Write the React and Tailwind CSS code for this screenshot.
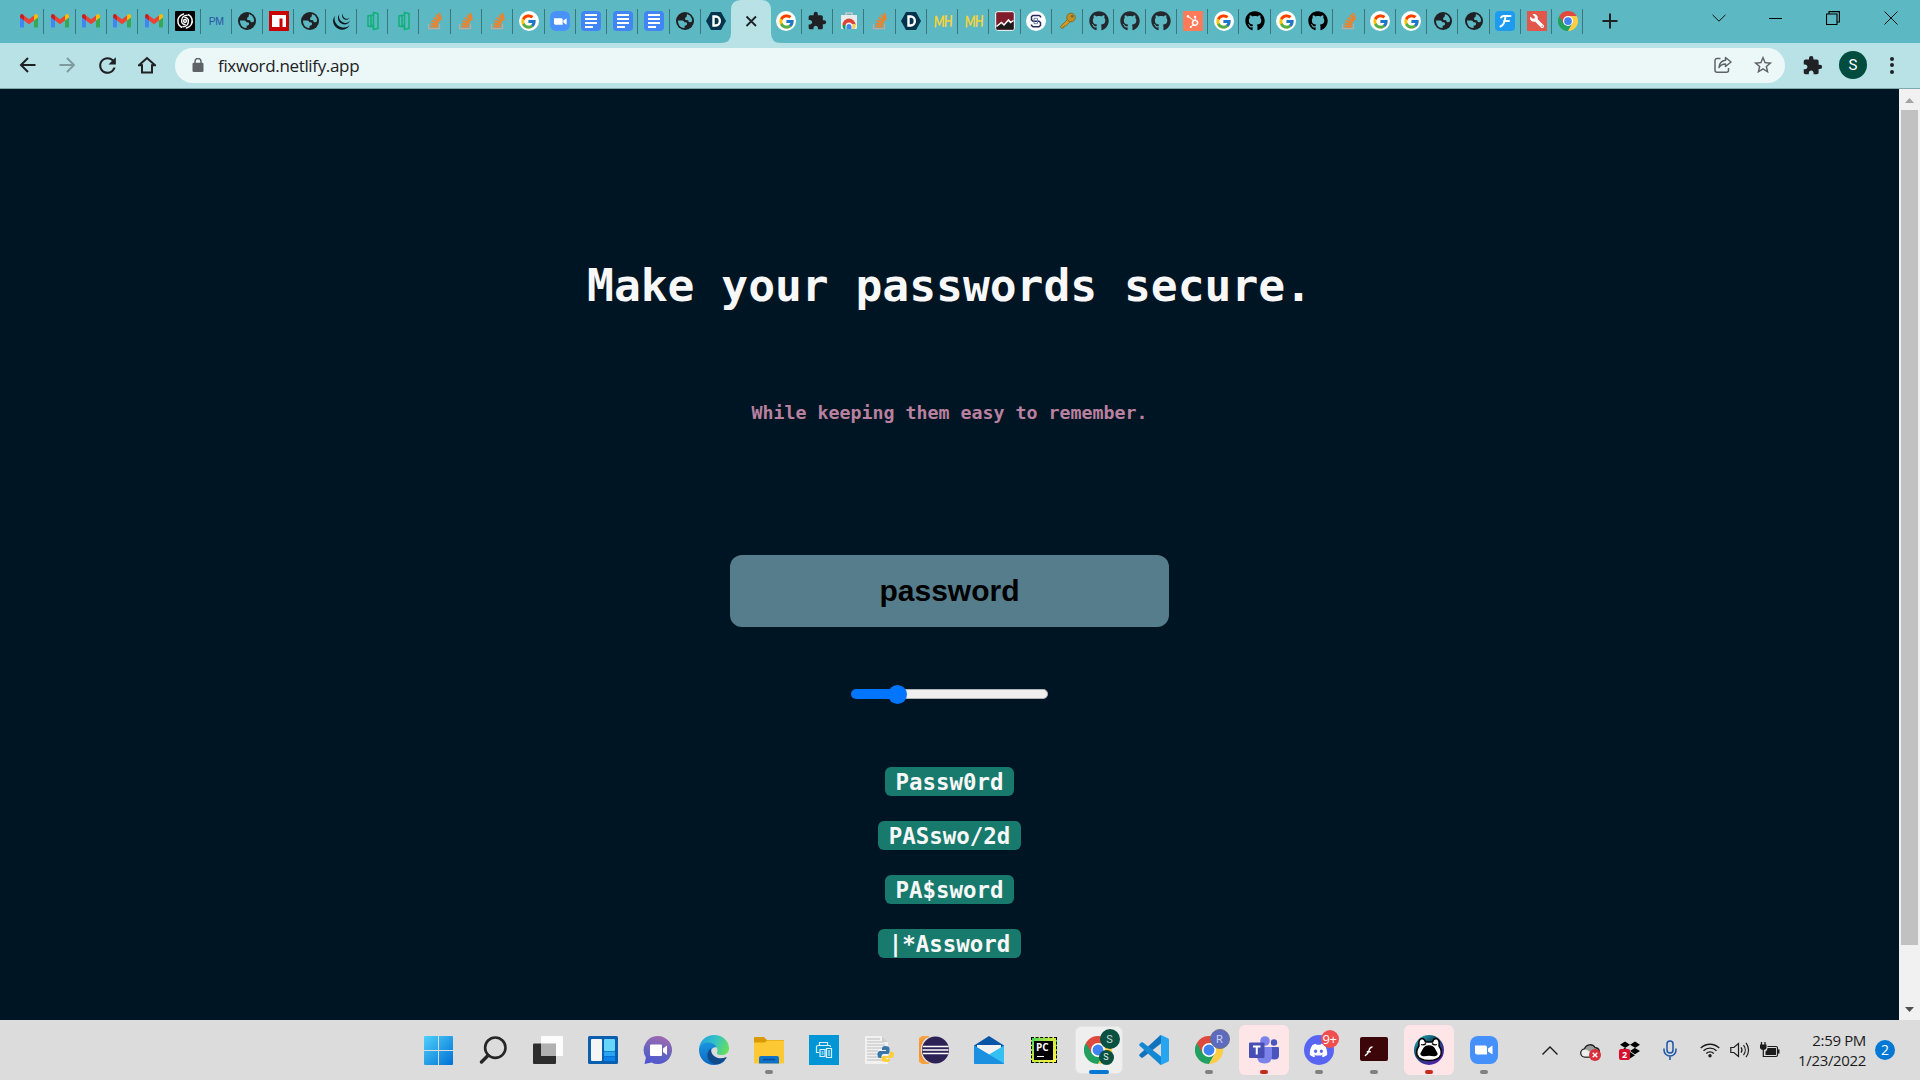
import React from "react";
import { FcGoogle } from "react-icons/fc";
import { FaGithub, FaHubspot, FaWrench, FaDiscord, FaDropbox } from "react-icons/fa";
import { SiJquery } from "react-icons/si";
import { MdExtension, MdRefresh } from "react-icons/md";

const UI = "font-['Open_Sans','Noto_Sans',sans-serif]";
const MONO = "font-['DejaVu_Sans_Mono','Liberation_Mono',monospace]";

const Gmail = () => (
  <svg viewBox="0 0 20 16" className="h-[16px] w-[20px]">
    <path d="M1 3v10.6c0 .6.4 1 1 1h3V7.4L1 4z" fill="#4285f4" />
    <path d="M19 3v10.6c0 .6-.4 1-1 1h-3V7.4L19 4z" fill="#34a853" />
    <path d="M15 2.4v5l4-3V3c0-1.900-2-2.600-3.300-1.300z" fill="#fbbc04" />
    <path d="M5 7.400v-5l5 3.800 5-3.800v5l-5 3.800z" fill="#ea4335" />
    <path d="M1 3v1.400l4 3v-5l-.7-.7C3 .4 1 1.100 1 3z" fill="#c5221f" />
  </svg>
);

const Spiral = () => (
  <div className="flex h-5 w-5 items-center justify-center rounded-[1px] bg-black">
    <svg viewBox="0 0 18 18" className="h-[18px] w-[18px]" fill="none" stroke="#fff" strokeWidth="1.500" strokeLinecap="round">
      <circle cx="9" cy="9" r="1.400" />
      <path d="M9 5.600a3.400 3.400 0 0 1 3.400 3.400c0 3.500-2.500 5.800-5.500 5.800" />
      <path d="M9 12.400A3.400 3.400 0 0 1 5.600 9c0-3.500 2.500-5.800 5.500-5.800" />
      <path d="M7.500 1.900a7.300 7.300 0 0 0-5.300 9.600q1 2.700 3.300 3.800" />
      <path d="M10.500 16.100a7.300 7.300 0 0 0 5.300-9.600q-1-2.700-3.300-3.800" />
    </svg>
  </div>
);

const PM = () => <span className="font-['Liberation_Sans',sans-serif] text-[10.500px] leading-none tracking-[-0.300px] text-[#2a55a5]">PM</span>;
const Globe = () => (
  <svg viewBox="0 0 18 18" className="h-[18px] w-[18px]">
    <circle cx="9" cy="9" r="9" fill="#202124" />
    <path d="M11 2q3.500 1 4.700 4.200.5 1.500.2 3.300-1.400 1.300-2.900.5-1-.6-.8-1.800l-2.700-.2Q8.700 7 9.200 5.900q.3-.9 1.300-1z" fill="#5cb8c2" />
    <path d="M2 8.500h4.500q1.700.2 1.700 1.700h1.900q1.500.7.900 2.300-.8 1.300-2.400 1.300v2.200Q4 16 2.600 12 1.900 10.200 2 8.500z" fill="#5cb8c2" />
  </svg>
);
const Npm = () => (
  <svg viewBox="0 0 20 20" className="h-5 w-5">
    <rect width="20" height="20" fill="#cb0000" />
    <path d="M3 4h14v12h-3.500V7.500H10.500V16H3z" fill="#fff" />
  </svg>
);
const Jq = () => <SiJquery className="h-[17px] w-[17px] text-[#10191f]" />;
const Door = () => (
  <svg viewBox="0 0 14 20" className="h-5 w-[14px]" fill="none" stroke="#14b07a" strokeWidth="1.600">
    <path d="M7.500 1.500l4.500 1.200v14.600l-4.500 1.200zM7.500 4L2 5v10l5.500 1M5 5v9.500h2.500" />
  </svg>
);
const SO = () => (
  <svg viewBox="0 0 16 18" className="h-[18px] w-4" fill="none">
    <path d="M1.500 12v4.700h11V12" stroke="#bcaaa4" strokeWidth="1.200" />
    <path d="M3.500 14.500h7.300M3.700 11.600l7.200.9M4.700 8.600l6.700 2.300M6.700 5.400l5.700 4.100M9.400 2.900l4.100 5.500M12.200 1l1.800 6.500" stroke="#f48024" strokeWidth="1.900" />
  </svg>
);
const G = () => (
  <div className="flex h-5 w-5 items-center justify-center rounded-full bg-white">
    <FcGoogle className="h-[17px] w-[17px]" />
  </div>
);
const Camera = ({ className }) => (
  <svg viewBox="0 0 18 12" className={className} fill="#fff">
    <path d="M0 1.500h10a2 2 0 0 1 2 2v7H2a2 2 0 0 1-2-2zM13 4.500L17.500 1.500v9L13 7.500z" />
  </svg>
);
const ZoomTab = () => (
  <div className="flex h-5 w-5 items-center justify-center rounded-md bg-[#4a92fb]">
    <Camera className="h-[9px] w-[13px]" />
  </div>
);
const Doc = () => (
  <div className="flex h-5 w-5 flex-col gap-[2px] rounded-sm bg-[#4285f4] pl-1 pt-[3px]">
    <i className="h-[2px] w-[12px] bg-white" />
    <i className="h-[2px] w-[12px] bg-white" />
    <i className="h-[2px] w-[12px] bg-white" />
    <i className="h-[2px] w-[8px] bg-white" />
  </div>
);
const Dee = () => (
  <svg viewBox="0 0 20 20" className="h-5 w-5">
    <path d="M5 1h10l5 9-5 9H5L0 10z" fill="#04344d" />
    <path d="M7.500 5.500h2.300a4 4.500 0 0 1 0 9H7.500z" fill="none" stroke="#fff" strokeWidth="2.400" />
  </svg>
);
const Puzzle = () => <MdExtension className="h-5 w-5 text-[#202124]" />;
const Store = () => (
  <svg viewBox="0 0 18 18" className="h-[18px] w-[18px]">
    <path d="M6 3V1h6v2" fill="none" stroke="#c9c9c9" strokeWidth="1.500" />
    <path d="M1 3h16v13a1 1 0 0 1-1 1H2a1 1 0 0 1-1-1z" fill="#e9eaea" />
    <path d="M2.500 13a6.500 6.500 0 0 1 13 0z" fill="#db4437" />
    <path d="M2.500 13q0 3 1.500 4h4l1-4z" fill="#0f9d58" />
    <path d="M15.500 12q0 4-1.500 5H8l3-5z" fill="#ffcd40" />
    <path d="M5.500 14a3.500 3.500 0 0 1 7 0v3h-7z" fill="#f1f1f1" />
    <path d="M6.500 14.500a2.500 2.500 0 0 1 5 0V17h-5z" fill="#4285f4" />
  </svg>
);
const MH = () => <span className="inline-block scale-x-[0.780] -rotate-3 font-['Lato',sans-serif] text-[16px] font-bold italic leading-none tracking-[-1px] text-[#f3d340]">MH</span>;
const Chart = () => (
  <svg viewBox="0 0 20 20" className="h-5 w-5">
    <rect x=".7" y=".7" width="18.600" height="18.600" rx="2" fill="#7f1d2d" stroke="#fff" strokeWidth="1" />
    <path d="M1.500 15.500l5-4 2.500 2.500 4.500-5 2 2.500 3-2V18.500h-17z" fill="#1d1a1c" />
    <path d="M1.500 15.500l5-4 2.500 2.500 4.500-5 2 2.500 3-2" fill="none" stroke="#fff" strokeWidth="1.500" />
  </svg>
);
const SB = () => (
  <svg viewBox="0 0 20 20" className="h-5 w-5" fill="none" stroke="#282c5c">
    <circle cx="10" cy="10" r="10" fill="#fff" stroke="none" />
    <path d="M14.500 6.500v-1L13 4.500H7L5.500 5.700V9L7 10.300h6l1.500 1.200v3L13 15.700H7l-1.500-1.200v-1" strokeWidth="1.500" />
    <path d="M8 7.300h3.500v5.400H8z" strokeWidth="1" stroke="#6d7fa8" />
  </svg>
);
const Key = () => (
  <svg viewBox="0 0 18 18" className="h-[18px] w-[18px]">
    <path d="M1.500 14.500L9 7l2.500 2.300-5 5-1.500-.2-.5 1.900H2z" fill="#d99a1c" stroke="#7b6325" strokeWidth=".8" />
    <circle cx="12" cy="5.500" r="4.300" fill="#c98f1c" stroke="#7b6325" strokeWidth=".8" />
    <circle cx="13.200" cy="4.300" r="1.300" fill="#5f6a4a" />
  </svg>
);
const Gh = () => <FaGithub className="h-[20px] w-[20px] text-[#24292f]" />;
const GhB = () => <FaGithub className="h-[20px] w-[20px] text-black" />;
const Hub = () => (
  <div className="flex h-5 w-5 items-center justify-center bg-[#ff7a59]">
    <FaHubspot className="h-[13px] w-[13px] text-white" />
  </div>
);
const Eff = () => (
  <div className="flex h-5 w-5 items-center justify-center rounded-sm bg-[#1d9bf0]">
    <svg viewBox="0 0 14 14" className="h-[14px] w-[14px]" fill="none" stroke="#fff" strokeWidth="2" strokeLinecap="round">
      <path d="M3 3.500Q4 1.800 6.500 2h6M7.500 2.500Q6.500 11 2.500 12.500M6 7h5" />
    </svg>
  </div>
);
const Fix = () => (
  <div className="flex h-5 w-5 items-center justify-center bg-[#e25749]">
    <FaWrench className="h-[14px] w-[14px] -scale-x-100 text-white" />
  </div>
);
const Chrome = ({ className = "h-5 w-5" }) => (
  <svg viewBox="0 0 48 48" className={className}>
    <path d="M24 24L3.200 12A24 24 0 0 0 24 48l10.400-18z" fill="#22a060" />
    <path d="M24 24l10.400 6L24 48a24 24 0 0 0 20.800-36H24z" fill="#fdcd45" />
    <path d="M24 24L13.600 30 3.200 12a24 24 0 0 1 41.600 0H24z" fill="#df4a3e" />
    <circle cx="24" cy="24" r="12" fill="#fff" />
    <circle cx="24" cy="24" r="9.300" fill="#3f83f3" />
  </svg>
);

const leftTabs = [Gmail, Gmail, Gmail, Gmail, Gmail, Spiral, PM, Globe, Npm, Globe, Jq, Door, Door, SO, SO, SO, G, ZoomTab, Doc, Doc, Doc, Globe, Dee];
const rightTabs = [G, Puzzle, Store, SO, Dee, MH, MH, Chart, SB, Key, Gh, Gh, Gh, Hub, G, GhB, G, GhB, SO, G, G, Globe, Globe, Eff, Fix, Chrome];

function Tab({ icon: Icon, divider = true }) {
  return (
    <div className="flex h-[42px] w-[31.280px] shrink-0 items-center">
      <div className="flex min-w-0 flex-1 items-center justify-center">
        <Icon />
      </div>
      <div className={divider ? "-ml-px h-[25px] w-px bg-[#3c757d]" : "-ml-px h-[25px] w-px"} />
    </div>
  );
}

function TabStrip() {
  return (
    <div className="flex h-[43px] bg-[#5cb8c2] pl-[13px]">
      {leftTabs.map((I, i) => (
        <Tab key={i} icon={I} divider={i < leftTabs.length - 1} />
      ))}
      <div className="flex h-[43px] w-[38.400px] shrink-0 items-end">
        <svg viewBox="0 0 60 43" className="-mx-[11px] h-[43px] w-[60px] shrink-0">
          <path d="M0 43Q10 43 10 33V10Q10 0 20 0h20q10 0 10 10v23q0 10 10 10z" fill="#b8e2e6" />
          <path d="M25.500 16.500l9.500 9.500M35 16.500L25.500 26" stroke="#202124" strokeWidth="1.800" />
        </svg>
      </div>
      {rightTabs.map((I, i) => (
        <Tab key={i} icon={I} />
      ))}
      <svg viewBox="0 0 16 16" className="ml-[19px] mt-[13px] h-4 w-4" stroke="#202124" strokeWidth="2">
        <path d="M8 .5v15M.5 8h15" />
      </svg>
      <div className="ml-auto mr-[22px] mt-[11px] flex h-[14px] items-center">
        <svg viewBox="0 0 14 8" className="mr-[43px] h-2 w-[14px]" fill="none" stroke="#111"><path d="M.5.800L7 7.200 13.500.800" /></svg>
        <div className="mr-[44px] h-px w-[13px] bg-black" />
        <svg viewBox="0 0 14 14" className="mr-[44px] h-[14px] w-[14px]" fill="none" stroke="#000" strokeWidth="1.100"><path d="M.5 3h10.500v10.500H.5zM3 3V.600h10.400v10.400H11" /></svg>
        <svg viewBox="0 0 14 14" className="h-[14px] w-[14px]" stroke="#111" strokeWidth="1"><path d="M.5.500l13 13M13.500.500l-13 13" /></svg>
      </div>
    </div>
  );
}

function Toolbar() {
  return (
    <div className="flex h-[46px] items-center border-b border-[#7fa9ab] bg-[#b8e2e6] pb-px">
      <svg viewBox="0 0 16 16" className="ml-[19px] h-4 w-[17px]" fill="none" stroke="#202124" strokeWidth="2"><path d="M16 8H1.500M8.500 1L1.500 8l7 7" /></svg>
      <svg viewBox="0 0 16 16" className="ml-[23px] h-4 w-[17px]" fill="none" stroke="#7d9a9f" strokeWidth="1.800"><path d="M0 8h14.500M7.500 1l7 7-7 7" /></svg>
      <MdRefresh className="ml-[19px] h-[25px] w-[25px] text-[#202124]" />
      <svg viewBox="0 0 18 18" className="ml-[18px] h-[18px] w-[18px]" fill="none" stroke="#202124" strokeWidth="2"><path d="M1 9.300h3V16.500h10V9.300h3L9 2z" strokeLinejoin="miter" /></svg>
      <div className="ml-[19px] flex h-[35px] w-[1610px] items-center rounded-full bg-[#ecf8f8]">
        <svg viewBox="0 0 12 14" className="ml-[17px] h-[14px] w-3">
          <rect x=".5" y="4.700" width="11" height="9.300" rx="1.200" fill="#5f6368" />
          <path d="M3 5V3.500a3 3 0 0 1 6 0V5" fill="none" stroke="#5f6368" strokeWidth="1.500" />
        </svg>
        <span className={`${UI} ml-[14px] text-[17px] leading-none tracking-[-0.340px] text-[#202124]`}>fixword.netlify.app</span>
        <svg viewBox="0 0 18 18" className="ml-auto h-[18px] w-[18px]" fill="none" stroke="#5f6368" strokeWidth="1.500" strokeLinejoin="round">
          <path d="M6.500 2.500H3a2 2 0 0 0-2 2v9.800a2 2 0 0 0 2 2h9.500a2 2 0 0 0 2-2V12" />
          <path d="M11.500 1.500L17 6l-5.500 4.500V8C8.500 8 6.500 9 5 11.500c.2-4 2.500-6.800 6.500-7.300z" />
        </svg>
        <svg viewBox="0 0 24 24" className="ml-[20px] mr-[11px] h-[22px] w-[22px]" fill="#5f6368">
          <path d="M22 9.240l-7.190-.62L12 2 9.190 8.630 2 9.240l5.460 4.730L5.820 21 12 17.270 18.180 21l-1.630-7.030L22 9.240zM12 15.400l-3.760 2.270 1-4.280-3.320-2.880 4.380-.38L12 6.100l1.710 4.040 4.380.38-3.320 2.880 1 4.280L12 15.400z" />
        </svg>
      </div>
      <MdExtension className="ml-[17px] h-[21px] w-[21px] text-[#202124]" />
      <div className="ml-4 flex h-7 w-7 items-center justify-center rounded-full bg-[#004d40] font-['Roboto',sans-serif] text-[15px] leading-none text-white">S</div>
      <div className="ml-[23px] flex flex-col gap-[2.500px]">
        <i className="h-1 w-1 rounded-full bg-[#202124]" />
        <i className="h-1 w-1 rounded-full bg-[#202124]" />
        <i className="h-1 w-1 rounded-full bg-[#202124]" />
      </div>
    </div>
  );
}

const suggestions = ["Passw0rd", "PASswo/2d", "PA$sword", "|*Assword"];

function Page() {
  return (
    <div className="flex h-[931px]">
      <main className="flex w-[1899px] flex-col items-center bg-[#001523]">
        <h1 className={`${MONO} mt-[167px] h-[60px] whitespace-pre text-[44.600px] font-bold leading-[60px] text-[#f8f8f8]`}>Make your passwords secure.</h1>
        <h2 className={`${MONO} mt-[82px] h-[30px] whitespace-pre text-[18.300px] font-bold leading-[30px] text-[#b9819f]`}>While keeping them easy to remember.</h2>
        <div className="mt-[127px] flex h-[72px] w-[439px] items-center justify-center rounded-xl bg-[#557d8c] font-['Liberation_Sans',sans-serif] text-[30px] font-bold leading-none text-black">password</div>
        <div className="mt-[57px] flex h-[20px] w-[197px] items-center">
          <div className="h-[10px] w-[46px] shrink-0 rounded-l-full bg-[#0075ff]" />
          <div className="z-10 -mx-[9.500px] h-[19px] w-[19px] shrink-0 rounded-full bg-[#0075ff]" />
          <div className="h-[10px] flex-1 rounded-r-full border border-l-0 border-[#b2b2b2] bg-[#efefef]" />
        </div>
        <ul className="mt-[63px] flex flex-col items-center gap-[25px]">
          {suggestions.map((s) => (
            <li key={s} className={`${MONO} h-[29px] rounded-md bg-[#177a6d] px-[10.500px] text-[22.400px] font-bold leading-[30px] text-[#f8f8f8]`}>{s}</li>
          ))}
        </ul>
      </main>
      <div className="flex w-[21px] flex-col items-center bg-[#f1f1f1]">
        <svg viewBox="0 0 9 5" className="mt-[9px] h-[5px] w-[9px]"><path d="M0 5L4.500 0 9 5z" fill="#a3a3a3" /></svg>
        <div className="mt-[7px] h-[835px] w-[17px] bg-[#c1c1c1]" />
        <svg viewBox="0 0 9 5" className="mt-[62px] h-[5px] w-[9px]"><path d="M0 0h9L4.500 5z" fill="#505050" /></svg>
      </div>
    </div>
  );
}

const WinLogo = () => (
  <svg viewBox="0 0 29 29" className="h-[29px] w-[29px]">
    <defs><linearGradient id="win" x1="0" y1="0" x2="1" y2="1"><stop stopColor="#4fd0fb" /><stop offset="1" stopColor="#0070d4" /></linearGradient></defs>
    <path d="M1 0h13v14H0V1q0-1 1-1zM15 0h13q1 0 1 1v13H15zM0 15h14v14H1q-1 0-1-1zM15 15h14v13q0 1-1 1H15z" fill="url(#win)" />
  </svg>
);
const SearchIcon = () => (
  <svg viewBox="0 0 28 28" className="mr-[2px] h-7 w-7" fill="none" stroke="#262626" strokeLinecap="round">
    <circle cx="16.300" cy="11.700" r="10.200" strokeWidth="2.600" />
    <path d="M9 19.500L2.500 26" strokeWidth="3.400" />
  </svg>
);
const TaskView = () => (
  <svg viewBox="0 0 30 28" className="mr-[2px] h-7 w-[30px]">
    <rect y="7.500" width="23" height="20.500" rx="1" fill="#2d2d2d" />
    <rect x="8" width="22" height="20" rx="1" fill="#fff" fillOpacity=".9" />
    <rect x="8" y="7.500" width="15" height="12.500" fill="#b1b1b1" />
  </svg>
);
const Widgets = () => (
  <svg viewBox="0 0 30 28" className="mr-[1px] h-7 w-[30px]">
    <rect width="30" height="28" rx="1.500" fill="#0b5fae" />
    <rect x="3" y="3" width="11" height="22" rx="1" fill="#f5f5f5" />
    <rect x="16" y="3" width="11" height="12" rx="1" fill="#67d6fb" />
    <rect x="16" y="15.500" width="11" height="4.500" fill="#2aa4f4" />
    <rect x="16" y="20.500" width="11" height="4.500" fill="#0b82ea" />
  </svg>
);
const Chat = () => (
  <svg viewBox="0 0 30 30" className="mr-[2px] h-[30px] w-[30px]">
    <defs><linearGradient id="chat" x1=".6" y1="0" x2=".3" y2="1"><stop stopColor="#a068b0" /><stop offset=".6" stopColor="#6264c0" /><stop offset="1" stopColor="#5054d0" /></linearGradient></defs>
    <path d="M15 1a14 14 0 1 1-6.500 26.400L1.500 29l1.400-6.500A14 14 0 0 1 15 1z" fill="url(#chat)" />
    <rect x="7" y="9.500" width="12" height="11.500" rx="1" fill="#fff" />
    <path d="M20 13.500l4-3v9.500l-4-3z" fill="#fff" />
  </svg>
);
const Edge = () => (
  <svg viewBox="0 0 30 30" className="h-[30px] w-[30px]">
    <defs>
      <linearGradient id="edgeTop" x1="0" y1=".3" x2="1" y2=".6"><stop stopColor="#1fa2df" /><stop offset=".5" stopColor="#35c2c5" /><stop offset="1" stopColor="#66e05a" /></linearGradient>
      <linearGradient id="edgeLow" x1=".2" y1="0" x2=".4" y2="1"><stop stopColor="#1a95e0" /><stop offset="1" stopColor="#0b67c2" /></linearGradient>
    </defs>
    <path d="M0 13C1.500 5 7.500 0 15 0c9 0 15 6 15 13.500 0 4-3 6.500-7 6.500-3.500 0-5.500-1.200-5-2.600.8-1.500 1-5-3-7.400C9.500 7 3 8.500 0 13z" fill="url(#edgeTop)" />
    <path d="M0 15C0 10 4.500 7.500 9 7.500c4.500 0 8 2.500 8.500 5-5-1.500-9 6.500-3 12 3.200 2.800 7 3.200 11.500 1-3 3-7 4.500-11 4.500C6.500 30 0 23.500 0 15z" fill="url(#edgeLow)" />
    <path d="M12 13.500c-4.500 3-5 9.500-.5 13.500 4.500 3.800 11.500 2.500 16-4 .3-.7-.2-1-.8-.7-6 2.700-15 0-14.700-8.800z" fill="#114a8b" />
  </svg>
);
const Explorer = () => (
  <svg viewBox="0 0 30 28" className="h-7 w-[30px]">
    <path d="M0 2q0-1 1-1h9l3 3h16q1 0 1 1v7H0z" fill="#d99a06" />
    <path d="M0 6.500h11l2-2h17V26.500q0 1-1 1H1q-1 0-1-1z" fill="#fcc935" />
    <path d="M5 27.500V22q0-2 2-2h16q2 0 2 2v5.500z" fill="#0f73cc" />
    <path d="M9 23.500h12" stroke="#0a4c92" strokeWidth="1.500" />
  </svg>
);
const Printer = () => (
  <div className="flex h-[30px] w-[30px] items-center justify-center bg-[#0096d6]">
    <svg viewBox="0 0 18 18" className="h-[18px] w-[18px]" fill="none" stroke="#d9f0fa" strokeWidth="1.200">
      <path d="M4.500 5V1.500h8V5M4 11.500H1.500V6Q1.500 4.500 3 4.500h11q1.500 0 1.500 1.500M5 8.500h5v7H5zM11.500 7.500h5v9h-5zM6.500 11h2M6.500 13h2M13 10h2M13 12h2M13 14h2" />
    </svg>
  </div>
);
const Python = () => (
  <svg viewBox="0 0 30 28" className="h-7 w-[30px]">
    <path d="M1 0h17l6 6v22H1z" fill="#f1f1f1" />
    <path d="M3 3h13M3 6h17M3 9h18M3 12h16M3 15h11M3 18h11M3 21h12M3 24h18" stroke="#bdbdbd" strokeWidth="1" />
    <path d="M18 0v6h6z" fill="#cfcfcf" />
    <path d="M21 10q-3 0-3 2.500V14h4v1h-6q-2.500 0-2.500 3.500T16 22h1.500v-2q0-2 2-2h4q2 0 2-2v-3.500Q25.500 10 21 10z" fill="#3776a8" />
    <path d="M22 26q-4.500 0-4.500-2.500V22q0-2 2-2h4q2.500 0 2.500-2.500v-2h1.500Q30 15.500 30 18.500T27.500 22H22v1h4v1q0 2-4 2z" fill="#ffcf3a" />
  </svg>
);
const Eclipse = () => (
  <svg viewBox="0 0 30 28" className="h-7 w-[30px]">
    <path d="M10 0A14 14 0 0 0 10 28a16 16 0 0 1 0-28z" fill="#f7942c" />
    <path d="M10 0A14 14 0 0 0 10 28" fill="none" stroke="#f9a13b" strokeWidth="3" />
    <circle cx="16.500" cy="14" r="13.500" fill="#2c2255" />
    <path d="M4 10.500h25.500M3.500 14h26M4 17.500h25.500" stroke="#fff" strokeWidth="1.700" />
  </svg>
);
const Mail = () => (
  <svg viewBox="0 0 30 28" className="h-7 w-[30px]">
    <path d="M0 9.500L15 0l15 9.500V18H0z" fill="#0a56a6" />
    <path d="M3 9h24v6L15 20 3 15z" fill="#f2f2f2" />
    <path d="M0 9.500L15 18.500 30 9.500V27q0 1-1 1H1q-1 0-1-1z" fill="#35c0f4" />
    <path d="M0 9.500l30 18q-.5.500-1 .5H1q-1 0-1-1z" fill="#1b90e0" />
  </svg>
);
const PyCharm = () => (
  <div className="flex h-[26px] w-[26px] items-center justify-center border border-dashed border-black bg-gradient-to-br from-[#21d759] via-[#cfe83a] to-[#fcf84a]">
    <div className="flex h-[19px] w-[19px] flex-col bg-black pl-[2px] pt-[2px] font-['Open_Sans',sans-serif] text-[10px] font-bold leading-[9px] text-white">
      PC
      <i className="ml-px mt-[4px] h-[1.500px] w-[7px] bg-white" />
    </div>
  </div>
);
const ChromeS = () => (
  <div className="relative flex h-12 w-12 items-center justify-center rounded-md border border-[#e4e4e4] bg-[#efefef]">
    <Chrome className="mr-px h-[28px] w-[28px]" />
    <div className="absolute right-[2px] top-[2px] flex h-5 w-5 items-center justify-center rounded-full bg-[#0a5142] font-['Roboto'] text-[11px] leading-none text-[#c5d8d4]">S</div>
    <div className="absolute bottom-[8px] right-[8px] flex h-[15px] w-[15px] items-center justify-center rounded-full bg-[#0a5142] font-['Roboto'] text-[9px] leading-none text-[#e3eeec]">S</div>
  </div>
);
const VsCode = () => (
  <svg viewBox="0 0 30 30" className="h-[30px] w-[30px]">
    <path d="M22 0v8.500L4 22.500q-1 .6-2 0L.6 21q-.8-.9 0-1.700L21 .5z" fill="#1173bd" />
    <path d="M22 30v-8.500L4 7.500q-1-.6-2 0L.6 9q-.8.900 0 1.700L21 29.500z" fill="#1588d4" />
    <path d="M22 0l7 3.200q1 .5 1 1.600v20.400q0 1.100-1 1.600L22 30q-1 0-1.500-.7 1.500.5 1.500-1.300V2q0-1.800-1.500-1.300Q21 0 22 0z" fill="#27a5f1" />
  </svg>
);
const ChromeR = () => (
  <div className="relative">
    <Chrome className="h-[28px] w-[28px]" />
    <div className="absolute -right-[7px] -top-[7px] flex h-5 w-5 items-center justify-center rounded-full border border-[#6d6f88] bg-[#5c6bc0] font-['Roboto'] text-[11px] leading-none text-[#cdd2ee]">R</div>
  </div>
);
const Teams = () => (
  <div className="flex h-[50px] w-[50px] items-center justify-center rounded-md bg-[#fde5e8]">
    <svg viewBox="0 0 30 28" className="h-7 w-[30px]">
      <circle cx="25" cy="6.500" r="3.200" fill="#4b53bc" />
      <path d="M20 11h9q1 0 1 1v7.500q0 4-4.500 4T20 20z" fill="#4b53bc" />
      <circle cx="16" cy="5" r="4.800" fill="#7b83eb" />
      <path d="M8 11h14q1 0 1 1v8q0 7.500-7.500 7.500T8 20z" fill="#7b83eb" />
      <rect y="6.500" width="15.500" height="15.500" rx="1" fill="#474fb5" />
      <path d="M4 10.500h7.500M7.750 10.500v8" stroke="#fff" strokeWidth="2" />
    </svg>
  </div>
);
const Discord = () => (
  <div className="relative flex h-[30px] w-[30px] items-center justify-center rounded-full bg-[#5865f2]">
    <FaDiscord className="h-[19px] w-[19px] text-white" />
    <div className="absolute -right-[5px] -top-[5px] flex h-[18px] w-[18px] items-center justify-center rounded-full bg-[#f04f50] font-['Open_Sans'] text-[13px] font-medium leading-none tracking-[-0.500px] text-white">9+</div>
  </div>
);
const Flash = () => (
  <div className="mb-[2px] flex h-[24px] w-[28px] items-center rounded-[2px] bg-[#3c0507] pl-1 pt-1">
    <svg viewBox="0 0 10 12" className="h-[11px] w-[9px]" fill="none" stroke="#fff" strokeWidth="1.600"><path d="M9.500 1Q6.500 1 5.500 5T1 10.800M3 6.300h4.500" /></svg>
  </div>
);
const Beast = () => (
  <div className="flex h-[50px] w-[50px] items-center justify-center rounded-md bg-[#fde5e8]">
    <svg viewBox="0 0 30 30" className="h-[30px] w-[30px]">
      <defs><linearGradient id="beast" x1="0" y1="0" x2=".8" y2="1"><stop stopColor="#35c9d6" /><stop offset=".4" stopColor="#0e4a63" /><stop offset="1" stopColor="#5b1fb5" /></linearGradient></defs>
      <circle cx="15" cy="15" r="15" fill="url(#beast)" />
      <path d="M5 11Q4 4 8 3.500q2.500 0 3.500 3.500h7q1-3.500 3.500-3.500Q26 4 25 11q3 4 2 8.500Q25 25.500 15 25.500T3 19.500Q2 15 5 11z" fill="#fff" stroke="#000" strokeWidth="1.500" />
      <path d="M9 15q2-4 6-4t6 4l2 4q-1 2-3 1.500-5-1.200-10 0-2 .5-3-1.500z" fill="#000" stroke="#000" strokeWidth="1.500" />
      <path d="M7 9.500q3 1 5-1M23 9.500q-3 1-5-1" stroke="#000" strokeWidth="1.300" fill="none" />
    </svg>
  </div>
);
const ZoomApp = () => (
  <div className="flex h-7 w-7 items-center justify-center rounded-lg bg-[#4690fb]">
    <Camera className="h-[12px] w-[18px]" />
  </div>
);

const GRAY = "w-2 bg-[#808080]";
const RED = "w-2 bg-[#c42b1c]";
const apps = [
  [WinLogo], [SearchIcon], [TaskView], [Widgets], [Chat], [Edge], [Explorer, GRAY], [Printer], [Python], [Eclipse], [Mail], [PyCharm],
  [ChromeS, "w-5 bg-[#0078d4]"], [VsCode], [ChromeR, GRAY], [Teams, RED], [Discord, GRAY], [Flash, GRAY], [Beast, RED], [ZoomApp, GRAY],
];

function Taskbar() {
  return (
    <div className={`${UI} flex h-[60px] bg-[#dcdcdc] pl-[411px] text-[#1b1b1b]`}>
      {apps.map(([Icon, mark], i) => (
        <div key={i} className="relative flex h-[60px] w-[55px] shrink-0 items-center justify-center">
          <Icon />
          {mark && <i className={`${mark} absolute bottom-[6px] h-1 rounded-full`} />}
        </div>
      ))}
      <div className="ml-auto flex items-center pr-[25px]">
        <svg viewBox="0 0 16 9" className="h-[9px] w-4" fill="none" stroke="#1b1b1b" strokeWidth="1.400"><path d="M.5 8.500L8 1l7.500 7.500" /></svg>
        <div className="relative ml-[22px]">
          <svg viewBox="0 0 20 15" className="h-[15px] w-5"><path d="M5 14a4 4 0 0 1-.5-8 5.800 5.800 0 0 1 10.500-1.500q4.500.500 4.500 5T15 14z" fill="#9b9b9b" stroke="#1d1d1d" strokeWidth="1.300" /><path d="M5 13.500a3.500 3.500 0 0 1 0-7q4 0 9 7z" fill="#eee" /></svg>
          <svg viewBox="0 0 12 12" className="absolute -bottom-[3px] -right-[1px] h-3 w-3"><circle cx="6" cy="6" r="6" fill="#d9303c" /><path d="M3.700 3.700l4.600 4.600M8.300 3.700L3.700 8.300" stroke="#fff" strokeWidth="1.400" /></svg>
        </div>
        <div className="relative ml-5 h-5 w-5">
          <FaDropbox className="h-5 w-5 text-black" />
          <div className="absolute -left-px bottom-0 flex h-[11px] w-[11px] items-center justify-center rounded-[2px] bg-[#d80f2c] text-[9px] font-bold leading-none text-white">2</div>
        </div>
        <svg viewBox="0 0 14 20" className="ml-[23px] h-5 w-[14px]" fill="none" stroke="#1a56a8" strokeWidth="1.500"><rect x="4" y="1" width="6" height="12" rx="3" /><path d="M1 8.500v1.500a6 6 0 0 0 12 0V8.500M7 16v4" /></svg>
        <svg viewBox="0 0 20 16" className="ml-[23px] h-4 w-5" fill="none" stroke="#1b1b1b" strokeWidth="1.400"><path d="M.8 6a13 13 0 0 1 18.400 0M3.500 8.800a9.200 9.200 0 0 1 13 0M6.300 11.400a5.200 5.200 0 0 1 7.400 0" /><circle cx="10" cy="13.700" r="1.700" fill="#1b1b1b" stroke="none" /></svg>
        <svg viewBox="0 0 20 16" className="ml-[10px] h-4 w-5" fill="none" stroke="#1b1b1b" strokeWidth="1.200"><path d="M.8 5.500h3L8.500 1.500v13L3.800 10.500h-3zM11 5.300a4.500 4.500 0 0 1 0 5.400M13.500 3a8 8 0 0 1 0 10M16 .800a11.500 11.500 0 0 1 0 14.400" /></svg>
        <svg viewBox="0 0 20 16" className="ml-[10px] h-4 w-5"><path d="M1.500 0v3M5 0v3" stroke="#1b1b1b" strokeWidth="1.300" /><path d="M0 2.500h6.500V6Q6 8 3.300 8T0 6z" fill="#1b1b1b" /><path d="M3.300 7v7.500H16q1.500 0 1.500-1.500V6q0-1.500-1.500-1.500H7.500" fill="none" stroke="#1b1b1b" strokeWidth="1.200" /><path d="M7.500 6H16v7H5.500V9.500Q7.500 8.500 7.500 6z" fill="#1b1b1b" /><path d="M18 7.500h1.500v4H18z" fill="#1b1b1b" /></svg>
        <div className="ml-[16px] flex w-[70px] flex-col items-end whitespace-nowrap text-[15px] leading-[20px] tracking-[-0.350px]">
          <span>2:59 PM</span>
          <span>1/23/2022</span>
        </div>
        <div className="ml-[9px] flex h-5 w-5 items-center justify-center rounded-full bg-[#0078d4] text-[14px] leading-none text-white">2</div>
      </div>
    </div>
  );
}

export default function App() {
  return (
    <div className="flex h-[1080px] w-[1920px] flex-col overflow-hidden bg-[#001523]">
      <TabStrip />
      <Toolbar />
      <Page />
      <Taskbar />
    </div>
  );
}
